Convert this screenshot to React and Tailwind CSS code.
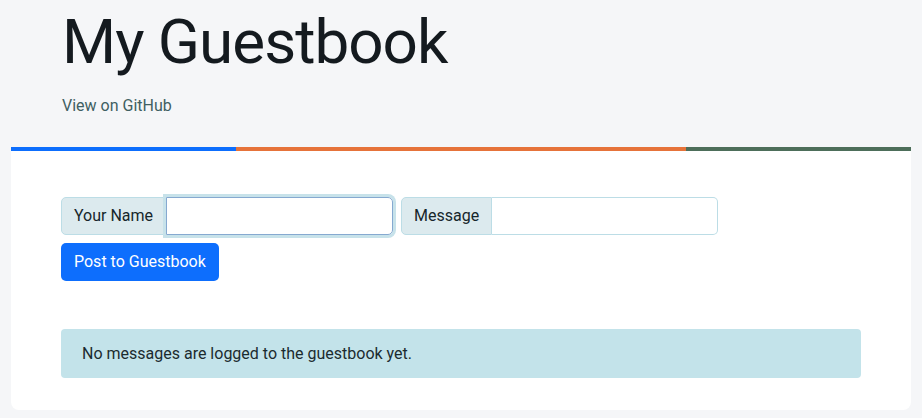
import React from 'react';

const App = () => {
    return (
        <div className="min-h-screen w-full bg-[#f5f6f8] font-['Roboto',sans-serif] text-[#212529] px-[11px] pb-[8px]">
            {/* Header */}
            <header className="px-[51px] pt-[2px] h-[147px]">
                <h1 className="text-[62px] leading-[80px] tracking-[-1px] font-normal text-[#141a1f]">My Guestbook</h1>
                <a href="#" className="block mt-[14px] text-[16px] leading-[20px] text-[#3f5f62]">View on GitHub</a>
            </header>

            {/* Color strip */}
            <div className="flex h-[4px]">
                <div className="w-1/4 bg-[#0d6efd]" />
                <div className="w-1/2 bg-[#e6733a]" />
                <div className="w-1/4 bg-[#4d6e5a]" />
            </div>

            {/* Card */}
            <main className="bg-white rounded-b-lg px-[50px] pt-[46px] pb-[32px]">
                <form className="flex flex-col gap-[8px]" onSubmit={(e) => e.preventDefault()}>
                    <div className="flex gap-[8px]">
                        <div className="flex h-[38px] w-[332px]">
                            <span className="flex items-center px-[12px] bg-[#dceaee] border border-[#bcdde6] rounded-l-[5px] text-[16px] text-[#16262b]">Your Name</span>
                            <input className="flex-1 min-w-0 border border-[#86a9d0] rounded-r-[5px] outline-none shadow-[0_0_0_3px_#c7e2ea]" />
                        </div>
                        <div className="flex h-[38px] w-[317px]">
                            <span className="flex items-center px-[12px] bg-[#dceaee] border border-[#bcdde6] rounded-l-[5px] text-[16px] text-[#16262b]">Message</span>
                            <input className="flex-1 min-w-0 border border-l-0 border-[#bcdde6] rounded-r-[5px] outline-none" />
                        </div>
                    </div>
                    <div>
                        <button type="submit" className="h-[38px] px-[13px] bg-[#0d6efd] text-white text-[16px] rounded-[5px]">Post to Guestbook</button>
                    </div>
                </form>

                <div className="mt-[48px] w-[800px] h-[49px] flex items-center px-[21px] bg-[#c3e3ea] rounded-[4px] text-[16px] text-[#1b2b2f]">
                    No messages are logged to the guestbook yet.
                </div>
            </main>
        </div>
    );
};

export default App;
